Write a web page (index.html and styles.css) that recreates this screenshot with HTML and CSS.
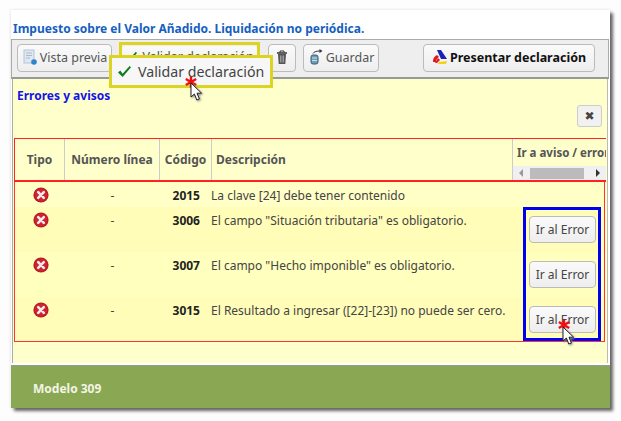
FILE: index.html
```html
<!DOCTYPE html>
<html lang="es">
<head>
<meta charset="utf-8">
<title>Modelo 309</title>
<link rel="stylesheet" href="styles.css">
</head>
<body>
<svg class="defs" width="0" height="0" aria-hidden="true">
  <symbol id="err" viewBox="0 0 16 16">
    <circle cx="8" cy="8" r="7.6" fill="#b81c26"/>
    <circle cx="8" cy="8" r="6.2" fill="#d3212d"/>
    <path d="M5.2 5.2l5.6 5.6M10.8 5.2l-5.6 5.6" stroke="#f4ecec" stroke-width="2.6" stroke-linecap="round"/>
  </symbol>
  <symbol id="cursor" viewBox="0 0 14 20">
    <path d="M1 1v14l3.4-3 2.4 6 2.6-1-2.4-5.8h4.6z" fill="#fff" stroke="#222" stroke-width="1"/>
  </symbol>
  <symbol id="star" viewBox="0 0 12 12">
    <path d="M6 0.5v11M0.8 3l10.400 6M0.8 9l10.400-6" stroke="#f00f0f" stroke-width="2.400"/>
  </symbol>
  <symbol id="tick" viewBox="0 0 16 14">
    <path d="M1 8l2.500-2 2.500 3.500L13.500 1 15 2.500 6 13z" fill="#0f7d1e"/>
  </symbol>
</svg>
<main class="window">
  <h1 class="title">Impuesto sobre el Valor Añadido. Liquidación no periódica.</h1>
  <div class="toolbar">
    <button class="btn btn-preview">
      <svg class="ico" viewBox="0 0 16 16"><rect x="2" y="1" width="10" height="13" fill="#dfe7f1" stroke="#b4c3d6"/><path d="M4 4h6M4 6.500h6M4 9h4" stroke="#a9bad0"/><circle cx="12" cy="13" r="2.800" fill="#2a86c8"/></svg>
      Vista previa
    </button>
    <div class="validate-wrap">
      <button class="btn btn-validate"><svg class="tick-small"><use href="#tick"/></svg> Validar declaración</button>
    </div>
    <button class="btn btn-trash">
      <svg class="ico" viewBox="0 0 16 16"><path d="M3 4h10" stroke="#333" stroke-width="1.500"/><path d="M6 3.500V2h4v1.500" fill="none" stroke="#333"/><path d="M4 5h8l-.7 10H4.700z" fill="#555"/><path d="M6.500 6.500v7M8 6.500v7M9.500 6.500v7" stroke="#bbb" stroke-width=".7"/></svg>
    </button>
    <button class="btn btn-save">
      <svg class="ico" viewBox="0 0 16 16"><rect x="3" y="6" width="7" height="9" rx="2" fill="#6f9bb3" stroke="#35607a"/><path d="M4 9h5M4 11.500h5" stroke="#cde0ea"/><path d="M5 4.500C6 2.500 9 2 12 2" fill="none" stroke="#333"/><path d="M11.500 0l3 2-3 2z" fill="#333"/></svg>
      Guardar
    </button>
    <button class="btn btn-submit">
      <svg class="ico" viewBox="0 0 16 16"><path d="M5 1h4l6 9H9z" fill="#1c22b8"/><path d="M1 12c0-3 2-5 4-6l2 2c-2 1-3 3-3 5H1z" fill="#e3161c"/><path d="M6 9l2 2-3 3H3z" fill="#e3161c"/><path d="M7 13l8-1-1 3H6z" fill="#f5d312"/></svg>
      Presentar declaración
    </button>
  </div>
  <section class="panel">
    <h2 class="panel-title">Errores y avisos</h2>
    <div class="panel-close"><button class="close">✖</button></div>
    <div class="head-row">
      <div class="th">Tipo</div>
      <div class="th">Número línea</div>
      <div class="th">Código</div>
      <div class="th th-left">Descripción</div>
      <div class="th th-go">
        <span class="go-label">Ir a aviso / error</span>
        <div class="scrollbar"><i class="arrow-l"></i><b class="thumb"></b><i class="arrow-r"></i></div>
      </div>
    </div>
    <div class="body">
      <div class="row row-first">
        <div class="cell cell-c"><svg class="err"><use href="#err"/></svg></div>
        <div class="cell cell-c">-</div>
        <div class="cell cell-code">2015</div>
        <div class="cell">La clave [24] debe tener contenido</div>
        <div class="cell"></div>
      </div>
      <div class="row">
        <div class="cell cell-c"><svg class="err"><use href="#err"/></svg></div>
        <div class="cell cell-c">-</div>
        <div class="cell cell-code">3006</div>
        <div class="cell">El campo "Situación tributaria" es obligatorio.</div>
        <div class="cell cell-go"><button class="btn btn-go">Ir al Error</button></div>
      </div>
      <div class="row row-alt">
        <div class="cell cell-c"><svg class="err"><use href="#err"/></svg></div>
        <div class="cell cell-c">-</div>
        <div class="cell cell-code">3007</div>
        <div class="cell">El campo "Hecho imponible" es obligatorio.</div>
        <div class="cell cell-go"><button class="btn btn-go">Ir al Error</button></div>
      </div>
      <div class="row">
        <div class="cell cell-c"><svg class="err"><use href="#err"/></svg></div>
        <div class="cell cell-c">-</div>
        <div class="cell cell-code">3015</div>
        <div class="cell">El Resultado a ingresar ([22]-[23]) no puede ser cero.</div>
        <div class="cell cell-go"><button class="btn btn-go">Ir al Error</button></div>
      </div>
      <div class="blue-box"></div>
    </div>
  </section>
  <footer class="footer">Modelo 309</footer>

  <div class="popup"><svg class="tick-big"><use href="#tick"/></svg>Validar declaración</div>
  <svg class="star star-a"><use href="#star"/></svg>
  <svg class="cur cur-a"><use href="#cursor"/></svg>
  <svg class="star star-b"><use href="#star"/></svg>
  <svg class="cur cur-b"><use href="#cursor"/></svg>
</main>
</body>
</html>
```
FILE: styles.css
```css
* { box-sizing: border-box; }
html, body { margin: 0; height: 100%; background: #fdfdfd; }
body {
  padding: 10px 0 0 11px;
  font-family: "Noto Sans", "Open Sans", sans-serif;
  color: #444;
  overflow: hidden;
}
.defs { position: absolute; }
.window {
  position: relative;
  width: 599px;
  height: 398px;
  background: #fff;
  box-shadow: 3px 3px 3px #666, 0 0 3px #ddd;
  display: flex;
  flex-direction: column;
}
.title {
  margin: 0;
  height: 29px;
  padding: 11px 0 0 2px;
  font-size: 12px;
  line-height: 15px;
  font-weight: 700;
  color: #1560c0;
  white-space: nowrap;
}
.toolbar {
  height: 40px;
  margin-right: 1px;
  background: #eee;
  border: 1px solid #aaa;
  border-bottom: 2px solid #999;
  padding: 4px 0 0 5px;
  display: flex;
  align-items: flex-start;
}
.btn {
  height: 28px;
  border: 1px solid #bbb;
  border-radius: 4px;
  background: linear-gradient(#fafafa, #eee);
  font: inherit;
  font-size: 12.5px;
  color: #555;
  padding: 0;
  display: inline-flex;
  align-items: center;
  justify-content: center;
  white-space: nowrap;
}
.toolbar .btn { padding-bottom: 2px; }
.ico { width: 16px; height: 16px; flex: none; margin-right: 2px; }
.btn-preview { width: 95px; }
.validate-wrap {
  margin-left: 7px;
  width: 141px;
  height: 32px;
  margin-top: -2px;
  border: 3px solid #dcd322;
  background: #eee;
}
.btn-validate { width: 100%; height: 24px; border: 0; gap: 4px; }
.tick-small { width: 13px; height: 11px; flex: none; }
.tick-big { width: 15px; height: 13px; flex: none; }
.btn-trash { width: 28px; margin-left: 8px; }
.btn-trash .ico { margin: 0; }
.btn-save { width: 76px; margin-left: 7px; }
.btn-submit {
  width: 172px;
  margin-left: 44px;
  font-weight: 700;
  color: #111;
}
.panel {
  flex: 1;
  margin: 0 2px 2px 1px;
  background: #ffc;
  border-left: 1px solid #aaa;
  border-right: 1px solid #bbb;
  padding: 0 1px;
  display: flex;
  flex-direction: column;
}
.panel-title {
  margin: 0;
  padding: 9px 0 0 3px;
  height: 27px;
  font-size: 12px;
  line-height: 16px;
  font-weight: 700;
  color: #1414e6;
}
.panel-close {
  display: flex;
  justify-content: flex-end;
  height: 32px;
  padding: 0 4px 0 0;
}
.close {
  width: 25px;
  height: 22px;
  margin-top: -1px;
  border: 1px solid #ccc;
  border-radius: 3px;
  background: #f1f1f1;
  color: #444;
  font: 700 12px/1 "DejaVu Sans", sans-serif;
  padding: 0;
}
.head-row, .row {
  display: grid;
  grid-template-columns: 50px 95px 52px 301px 1fr;
}
.head-row {
  height: 44px;
  border: 1px solid #f22;
  border-bottom: 2px solid #f22;
  border-right: 0;
  border-top: 1px solid #f22;
}
.th {
  font-size: 12px;
  font-weight: 700;
  color: #555;
  display: flex;
  align-items: center;
  justify-content: center;
  border-right: 1px solid #ccc;
  white-space: nowrap;
}
.th-left { justify-content: flex-start; padding-left: 4px; }
.th-go {
  border-right: 0;
  display: block;
  overflow: hidden;
}
.go-label { display: block; padding: 5px 0 0 4px; line-height: 17px; font-size: 11.5px; }
.scrollbar {
  height: 14px;
  margin-top: 5px;
  background: #f0f0f0;
  position: relative;
  display: flex;
  align-items: center;
  padding: 0 6px;
}
.arrow-l { width: 0; height: 0; border: 4px solid transparent; border-right-color: #999; border-left: 0; }
.arrow-r { width: 0; height: 0; border: 4px solid transparent; border-left-color: #333; border-right: 0; margin-left: 12px; }
.thumb { width: 60px; height: 11px; background: #bbb; margin-left: 7px; }
.body {
  position: relative;
  height: 160px;
  margin-right: 1px;
  border: 1px solid #f33;
  border-top: 0;
  background: #ffffc6;
  overflow: hidden;
}
.row {
  height: 45px;
  font-size: 12px;
  background: #fffdb8;
}
.row-first { height: 25px; background: #ffffc6; }
.row-alt { background: #ffffbe; }
.cell { padding-top: 5px; line-height: 17px; white-space: nowrap; color: #444; }
.cell-c { text-align: center; }
.cell-code { font-weight: 700; color: #222; text-align: right; padding-right: 12px; }
.err { width: 16px; height: 16px; display: block; margin: 0 auto; position: relative; left: 1px; }
.row .cell:nth-child(4) { margin-left: -1px; }
.cell-go { padding: 9px 0 0 16px; }
.btn-go { width: 67px; height: 27px; font-size: 12px; color: #444; }
.blue-box {
  position: absolute;
  left: 508px;
  top: 25px;
  width: 78px;
  height: 134px;
  border: 3px solid #0000f0;
  pointer-events: none;
}
.footer {
  height: 43px;
  background: #8aa853;
  border-top: 1px solid #999;
  padding: 2px 0 0 22px;
  display: flex;
  align-items: center;
  color: #f4f4e6;
  font-size: 12px;
  font-weight: 700;
}
.popup {
  position: absolute;
  left: 98px;
  top: 45px;
  width: 164px;
  height: 33px;
  border: 3px solid #dcd322;
  background: #f7f7f7;
  display: flex;
  align-items: center;
  gap: 6px;
  padding-left: 5px;
  font-size: 14.2px;
  color: #444;
  white-space: nowrap;
}
.star { position: absolute; width: 12px; height: 12px; }
.cur { position: absolute; width: 14px; height: 20px; filter: drop-shadow(1px 1px 1px #888); }
.star-a { left: 174px; top: 66px; }
.cur-a { left: 179px; top: 72px; }
.star-b { left: 547px; top: 309px; }
.cur-b { left: 551px; top: 316px; }
```
